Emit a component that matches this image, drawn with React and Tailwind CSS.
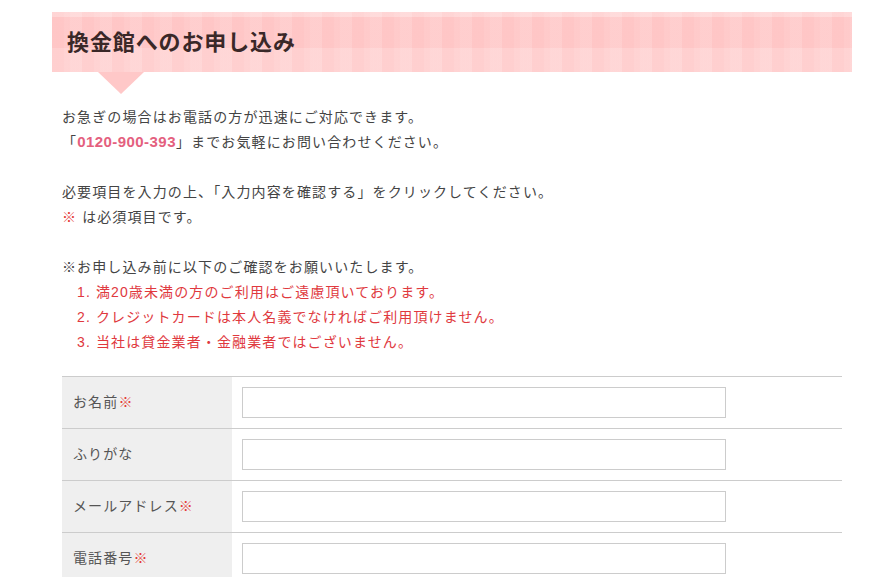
import { useState } from 'react';

const fields = [
  { label: 'お名前', required: true, name: 'name' },
  { label: 'ふりがな', required: false, name: 'kana' },
  { label: 'メールアドレス', required: true, name: 'email' },
  { label: '電話番号', required: true, name: 'tel' },
];

const notes = [
  '満20歳未満の方のご利用はご遠慮頂いております。',
  'クレジットカードは本人名義でなければご利用頂けません。',
  '当社は貸金業者・金融業者ではございません。',
];

export default function App() {
  const [values, setValues] = useState({});

  return (
    <div className="min-h-screen bg-white font-['Liberation_Sans','Noto_Sans_CJK_JP',sans-serif] text-[14px] tracking-[0.08em] text-[#444]">
      <div className="ml-[52px] w-[800px] pt-[12px]">
        {/* HEADER */}
        <div className="relative">
          <h2 className="flex h-[60px] items-center bg-[#ffd0d0] bg-[linear-gradient(to_bottom,rgba(255,238,238,0.3)_0_5px,rgba(255,175,175,0.15)_5px_36px,rgba(255,228,228,0.2)_36px),repeating-linear-gradient(to_right,rgba(255,160,160,0.12)_0_12px,rgba(255,190,190,0.06)_12px_18px,rgba(255,255,255,0.08)_18px_30px)] pl-[15px] text-[22px] font-bold tracking-[0.04em] text-[#3a2828]">
            換金館へのお申し込み
          </h2>
          <div className="absolute left-[46px] top-[60px] h-0 w-0 border-l-[23px] border-r-[23px] border-t-[22px] border-l-transparent border-r-transparent border-t-[#ffc8c8]" />
        </div>

        {/* INTRO TEXT */}
        <div className="mt-[33px] px-[10px] leading-[25px]">
          <p>お急ぎの場合はお電話の方が迅速にご対応できます。</p>
          <p className="h-[25px]">
            「<span className="text-[15px] leading-none font-bold tracking-[0.03em] text-[#e4607e]">0120-900-393</span>」までお気軽にお問い合わせください。
          </p>
          <p className="h-[25px]" />
          <p>必要項目を入力の上、「入力内容を確認する」をクリックしてください。</p>
          <p>
            <span className="text-[#e53935]">※</span> は必須項目です。
          </p>
          <p className="h-[25px]" />
          <p>※お申し込み前に以下のご確認をお願いいたします。</p>
          <ol className="pl-[15px] text-[#e0393e]">
            {notes.map((n, i) => (
              <li key={i}>
                {i + 1}. {n}
              </li>
            ))}
          </ol>
        </div>

        {/* FORM TABLE */}
        <div className="mx-[10px] mt-[21px]">
          {fields.map((f) => (
            <div key={f.name} className="flex h-[52px] border-t border-[#cccccc]">
              <div className="flex w-[170px] items-center bg-[#efefef] pl-[11px] text-[#555]">
                {f.label}
                {f.required && <span className="text-[#e53935]">※</span>}
              </div>
              <div className="flex items-start px-[10px] pt-[10px]">
                <input
                  type="text"
                  value={values[f.name] || ''}
                  onChange={(e) => setValues({ ...values, [f.name]: e.target.value })}
                  className="h-[31px] w-[484px] border border-[#cccccc] bg-white px-2 outline-none"
                />
              </div>
            </div>
          ))}
        </div>
      </div>
    </div>
  );
}
